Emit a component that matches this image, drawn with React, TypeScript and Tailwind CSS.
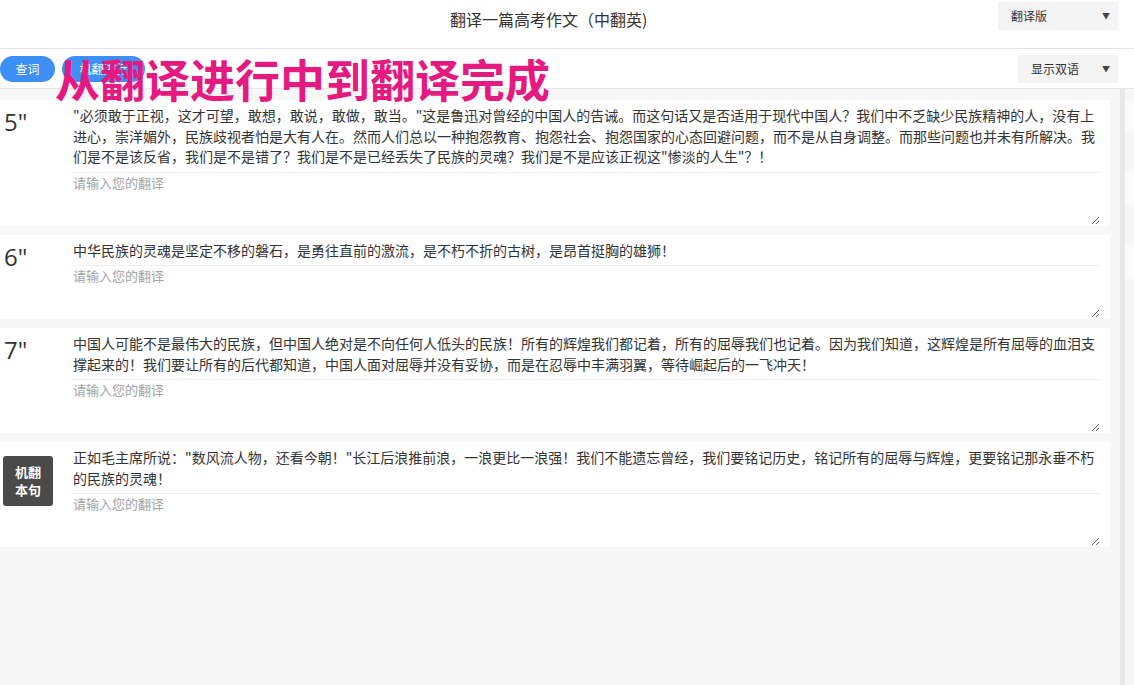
import React from "react";

const cjk = "font-['Noto_Sans_CJK_SC','Noto_Sans',sans-serif]";

type Item = { no?: string; text: string; machine?: boolean };

const items: Item[] = [
  {
    no: '5"',
    text: '"必须敢于正视，这才可望，敢想，敢说，敢做，敢当。"这是鲁迅对曾经的中国人的告诫。而这句话又是否适用于现代中国人？我们中不乏缺少民族精神的人，没有上进心，崇洋媚外，民族歧视者怕是大有人在。然而人们总以一种抱怨教育、抱怨社会、抱怨国家的心态回避问题，而不是从自身调整。而那些问题也并未有所解决。我们是不是该反省，我们是不是错了？我们是不是已经丢失了民族的灵魂？我们是不是应该正视这"惨淡的人生"？！',
  },
  {
    no: '6"',
    text: "中华民族的灵魂是坚定不移的磐石，是勇往直前的激流，是不朽不折的古树，是昂首挺胸的雄狮！",
  },
  {
    no: '7"',
    text: "中国人可能不是最伟大的民族，但中国人绝对是不向任何人低头的民族！所有的辉煌我们都记着，所有的屈辱我们也记着。因为我们知道，这辉煌是所有屈辱的血泪支撑起来的！我们要让所有的后代都知道，中国人面对屈辱并没有妥协，而是在忍辱中丰满羽翼，等待崛起后的一飞冲天！",
  },
  {
    machine: true,
    text: '正如毛主席所说："数风流人物，还看今朝！"长江后浪推前浪，一浪更比一浪强！我们不能遗忘曾经，我们要铭记历史，铭记所有的屈辱与辉煌，更要铭记那永垂不朽的民族的灵魂！',
  },
];

const Select = ({ label, w }: { label: string; w: string }) => (
  <div className={`${w} h-[28px] bg-[#f4f4f4] rounded-[2px] flex items-center justify-between pl-[13px] pr-[8px] text-[12px] text-[#333]`}>
    <span>{label}</span>
    <span className="text-[8px] text-[#444]">▼</span>
  </div>
);

const Card = ({ item }: { item: Item }) => (
  <div className="w-[1110px] bg-white flex shrink-0">
    {/* left: sentence no. or machine button */}
    <div className="w-[73px] shrink-0">
      {item.machine ? (
        <div className="ml-[3px] mt-[14px] w-[50px] h-[50px] rounded-[3px] bg-[#4a4a4a] text-white text-[13px] font-bold leading-[18px] flex flex-col items-center justify-center">
          <span>机翻</span>
          <span>本句</span>
        </div>
      ) : (
        <div className="pl-[4px] pt-[6px] text-[24px] leading-[32px] text-[#333] font-['Open_Sans',sans-serif]">
          {item.no}
        </div>
      )}
    </div>
    <div className="w-[1027px] shrink-0 pb-[1px]">
      <p className="pt-[5px] pb-[5px] text-[14px] leading-[20.5px] text-[#333]">{item.text}</p>
      <div className="border-t border-[#eeeeee] -ml-[2px]">
        <textarea
          placeholder="请输入您的翻译"
          className={`${cjk} block w-full h-[52px] pl-[2px] pt-[1px] text-[13px] leading-[18px] text-[#333] placeholder:text-[#a3a3a3] outline-none border-0 bg-transparent`}
        />
      </div>
    </div>
  </div>
);

export default function App() {
  return (
    <div className={`${cjk} w-[1134px] h-[685px] overflow-hidden flex flex-col bg-white`}>
      {/* header */}
      <div className="h-[49px] shrink-0 border-b border-[#e3e3e3] flex items-start">
        <div className="ml-[450px] mt-[8px] text-[16px] leading-[22px] text-[#333]">翻译一篇高考作文（中翻英)</div>
        <div className="ml-auto mr-[16px] mt-[2px]">
          <Select label="翻译版" w="w-[120px]" />
        </div>
      </div>

      {/* toolbar */}
      <div className="relative h-[40px] shrink-0 border-b border-[#e8e8e8] flex items-center">
        <button className="h-[26px] w-[55px] rounded-full bg-[#3d8ef5] text-white text-[12px]">查词</button>
        <button className="ml-[7px] h-[26px] w-[83px] rounded-full bg-[#3d8ef5] text-white text-[12px]">机翻进行</button>
        <div className="ml-auto mr-[16px]">
          <Select label="显示双语" w="w-[100px]" />
        </div>
        {/* overlay caption */}
        <div className="absolute left-[55px] top-[7px] text-[45px] leading-none font-bold text-[#e5197f] whitespace-nowrap">
          从翻译进行中到翻译完成
        </div>
      </div>

      {/* content */}
      <div className="flex-1 flex bg-[#f7f7f7] min-h-0">
        <div className="w-[1120px] shrink-0 pt-[11px] flex flex-col gap-[9px] overflow-hidden">
          {items.map((it, i) => (
            <Card key={i} item={it} />
          ))}
        </div>
        <div className="w-[5px] shrink-0 bg-[#e9e9e9]" />
        <div className="flex-1 flex flex-col gap-[40px] pt-[12px]">
          <div className="h-[30px] bg-[#fbfbfb]" />
          <div className="h-[34px] bg-[#fbfbfb]" />
          <div className="h-[34px] bg-[#fbfbfb]" />
        </div>
      </div>
    </div>
  );
}
